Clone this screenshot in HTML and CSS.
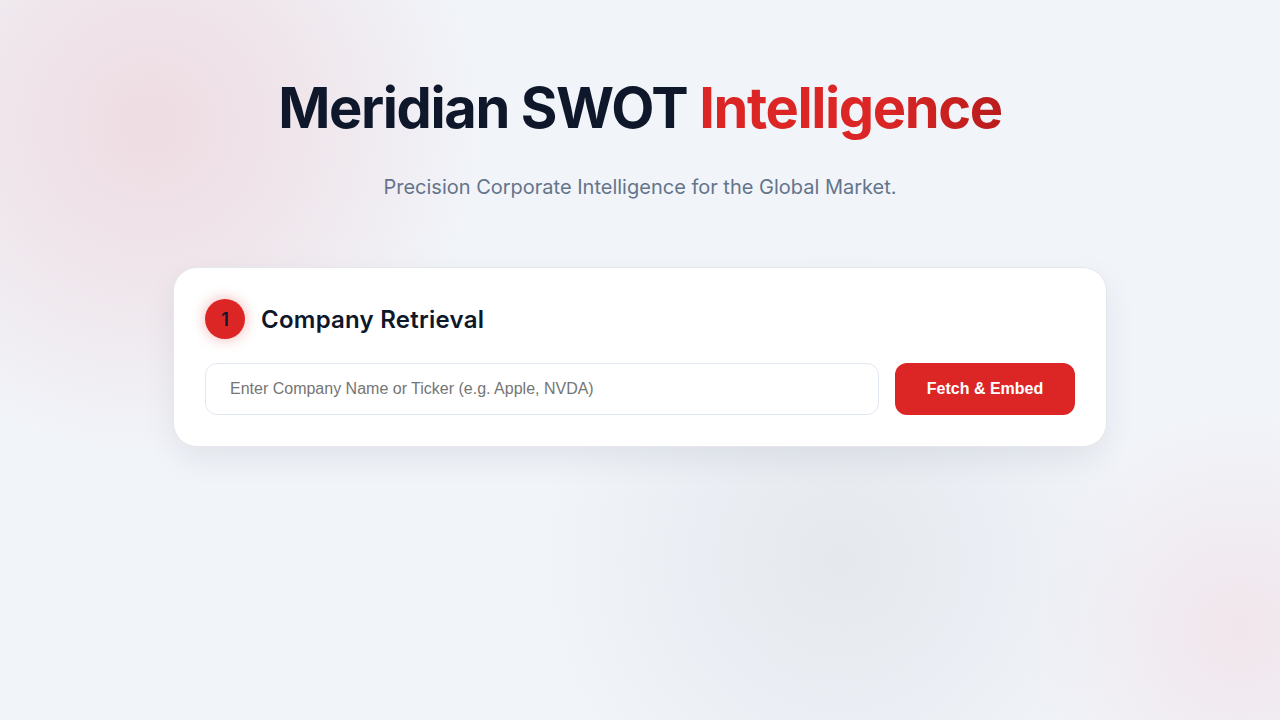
FILE: index.html
```html
<!DOCTYPE html>
<html lang="en">
<head>
<meta charset="utf-8">
<title>Meridian SWOT Intelligence</title>
<link rel="stylesheet" href="styles.css">
</head>
<body>
<div class="bg">
  <main class="page">
    <header class="hero">
      <h1 class="title">Meridian SWOT <span class="accent">Intelligence</span></h1>
      <p class="subtitle">Precision Corporate Intelligence for the Global Market.</p>
    </header>
    <section class="card">
      <div class="card-head">
        <span class="badge">1</span>
        <h2 class="card-title">Company Retrieval</h2>
      </div>
      <div class="row">
        <input class="field" type="text" placeholder="Enter Company Name or Ticker (e.g. Apple, NVDA)">
        <button class="btn" type="button">Fetch &amp; Embed</button>
      </div>
    </section>
  </main>
</div>
</body>
</html>
```
FILE: styles.css
```css
* { box-sizing: border-box; }
html, body { margin: 0; padding: 0; }
body {
  font-family: Inter, "Noto Sans", sans-serif;
  background: #f1f4f9;
  color: #0f172a;
}
.bg {
  min-height: 720px;
  background:
    radial-gradient(circle at 150px 125px, rgba(238, 218, 224, 0.9) 0, rgba(238, 220, 226, 0.6) 150px, rgba(241, 244, 249, 0) 330px),
    radial-gradient(circle at 840px 560px, rgba(229, 233, 238, 1) 0, rgba(230, 234, 240, 0.6) 150px, rgba(241, 244, 249, 0) 300px),
    radial-gradient(circle at 1240px 630px, rgba(241, 229, 235, 0.95) 0, rgba(240, 230, 236, 0.5) 110px, rgba(241, 244, 249, 0) 220px),
    #f1f4f9;
}
.page {
  display: flex;
  flex-direction: column;
  align-items: center;
  padding-top: 72px;
}
.hero { text-align: center; }
.title {
  margin: 0;
  font-size: 56px;
  font-weight: 700;
  letter-spacing: -0.025em;
  line-height: 72px;
  color: #0f172a;
}
.accent {
  background: linear-gradient(90deg, #dc2626 0%, #dc2626 60%, #b91c1c 100%);
  -webkit-background-clip: text;
  background-clip: text;
  color: transparent;
}
.subtitle {
  margin: 28px 0 0;
  font-size: 20px;
  line-height: 30px;
  color: #64748b;
  font-weight: 400;
}
.card {
  margin-top: 65px;
  width: 934px;
  background: #ffffff;
  border: 1px solid #e5e7eb;
  border-radius: 24px;
  padding: 31px;
  box-shadow: 0 12px 32px rgba(15, 23, 42, 0.07);
}
.card-head {
  display: flex;
  align-items: center;
  gap: 16px;
}
.badge {
  width: 40px;
  height: 40px;
  border-radius: 50%;
  background: #dc2626;
  color: #0f172a;
  display: flex;
  align-items: center;
  justify-content: center;
  font-size: 18px;
  font-weight: 600;
  box-shadow: 0 0 14px rgba(220, 38, 38, 0.35);
}
.card-title {
  margin: 0;
  font-size: 24px;
  font-weight: 600;
  color: #0f172a;
  letter-spacing: 0.01em;
}
.row {
  display: flex;
  gap: 16px;
  margin-top: 24px;
}
.field {
  flex: 1;
  height: 52px;
  border: 1px solid #e2e8f0;
  border-radius: 12px;
  padding: 0 24px;
  font-family: "Liberation Sans", Arial, sans-serif;
  font-size: 16px;
  color: #0f172a;
  background: #fff;
  outline: none;
}
.field::placeholder { color: #757575; }
.btn {
  width: 180px;
  height: 52px;
  border: none;
  border-radius: 12px;
  background: #dc2626;
  color: #fff;
  font-family: "Liberation Sans", Arial, sans-serif;
  font-size: 16px;
  font-weight: 700;
  cursor: pointer;
}
```
